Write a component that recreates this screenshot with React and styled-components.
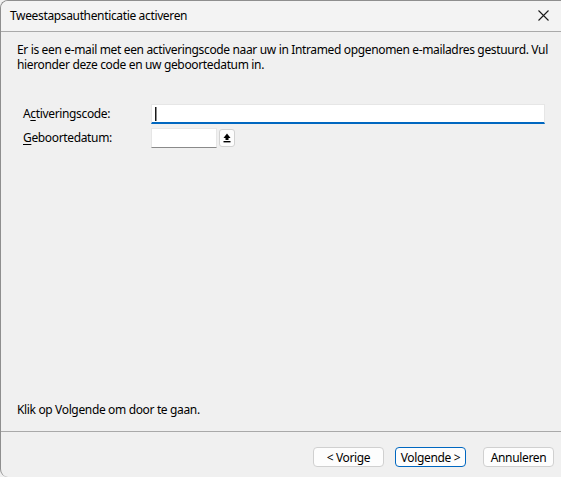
import React from "react";
import styled, { createGlobalStyle } from "styled-components";

const GlobalStyle = createGlobalStyle`
  html, body {
    margin: 0;
    padding: 0;
    background: #f0f0f0;
  }
  * { box-sizing: border-box; }
`;

const Window = styled.div`
  width: 561px;
  height: 477px;
  display: flex;
  flex-direction: column;
  background: #f0f0f0;
  border-top: 1px solid #8e8e8e;
  border-left: 1px solid #8e8e8e;
  border-radius: 8px 0 0 8px;
  overflow: hidden;
  font-family: "Noto Sans", "Liberation Sans", sans-serif;
  font-size: 12px;
  letter-spacing: -0.35px;
  color: #000;
`;

const TitleBar = styled.div`
  height: 31px;
  flex: none;
  display: flex;
  align-items: center;
  justify-content: space-between;
  padding: 0 8px 1px 9px;
  background: #f3f3f3;
  border-bottom: 1px solid #a9a9a9;
`;

const Title = styled.span`
  font-size: 12px;
`;

const CloseButton = styled.button`
  width: 20px;
  height: 20px;
  padding: 0;
  border: none;
  background: transparent;
  display: flex;
  align-items: center;
  justify-content: center;
  color: #1a1a1a;
`;

const Body = styled.div`
  flex: 1;
  display: flex;
  flex-direction: column;
  padding: 10px 6px 14px 16px;
`;

const Intro = styled.p`
  margin: 0;
  line-height: 15px;
`;

const Form = styled.div`
  margin: 32px 10px 0 0;
  padding-left: 6px;
  display: grid;
  grid-template-columns: 128px 1fr;
  row-gap: 4px;
  align-items: center;
`;

const Label = styled.label`
  line-height: 20px;
`;

const Key = styled.span`
  text-decoration: underline;
  text-underline-offset: 2px;
`;

const TextField = styled.div`
  height: 20px;
  background: #fff;
  border: 1px solid #e6e6e6;
  border-bottom: 2px solid #0067c0;
  display: flex;
  align-items: center;
  padding-left: 3px;
`;

const Caret = styled.span`
  width: 1px;
  height: 14px;
  background: #1a1a1a;
  box-shadow: 0.5px 0 0 #1a1a1a;
`;

const DateRow = styled.div`
  display: flex;
  align-items: center;
  gap: 2px;
`;

const DateField = styled.div`
  width: 66px;
  height: 20px;
  background: #fff;
  border: 1px solid #e6e6e6;
  border-bottom: 1px solid #8a8a8a;
`;

const SpinButton = styled.button`
  width: 16px;
  height: 18px;
  padding: 0;
  border: 1px solid #d2d2d2;
  border-radius: 3px;
  background: #fdfdfd;
  display: flex;
  align-items: center;
  justify-content: center;
`;

const Spacer = styled.div`
  flex: 1;
`;

const Hint = styled.p`
  margin: 0;
  line-height: 15px;
`;

const Footer = styled.div`
  flex: none;
  height: 46px;
  border-top: 1px solid #a9a9a9;
  display: flex;
  align-items: flex-start;
  justify-content: flex-end;
  padding: 15px 7px 0 0;
`;

const Button = styled.button`
  width: 71px;
  height: 20px;
  padding: 0;
  margin-left: ${(p) => p.$gap}px;
  background: #fdfdfd;
  border: 1px solid ${(p) => (p.$primary ? "#0067c0" : "#d0d0d0")};
  border-radius: 4px;
  font-family: inherit;
  font-size: 12px;
  letter-spacing: inherit;
  color: #000;
`;

const CloseIcon = () => (
  <svg width="11" height="11" viewBox="0 0 11 11">
    <path d="M0.5 0.5 L10.5 10.5 M10.5 0.5 L0.5 10.5" stroke="currentColor" strokeWidth="1.1" />
  </svg>
);

const UploadIcon = () => (
  <svg width="8" height="10" viewBox="0 0 8 10">
    <path d="M4 0.5 L7.5 5 L0.5 5 Z" fill="#000" />
    <rect x="2.5" y="4.5" width="3" height="2.5" fill="#000" />
    <rect x="0.5" y="8" width="7" height="1.4" fill="#000" />
  </svg>
);

export default function App() {
  return (
    <>
      <GlobalStyle />
      <Window>
        <TitleBar>
          <Title>Tweestapsauthenticatie activeren</Title>
          <CloseButton aria-label="Sluiten">
            <CloseIcon />
          </CloseButton>
        </TitleBar>
        <Body>
          <Intro>
            Er is een e-mail met een activeringscode naar uw in Intramed opgenomen e-mailadres gestuurd. Vul
            hieronder deze code en uw geboortedatum in.
          </Intro>
          <Form>
            <Label>
              A<Key>c</Key>tiveringscode:
            </Label>
            <TextField>
              <Caret />
            </TextField>
            <Label>
              <Key>G</Key>eboortedatum:
            </Label>
            <DateRow>
              <DateField />
              <SpinButton aria-label="Kiezen">
                <UploadIcon />
              </SpinButton>
            </DateRow>
          </Form>
          <Spacer />
          <Hint>Klik op Volgende om door te gaan.</Hint>
        </Body>
        <Footer>
          <Button $gap={0}>&lt; Vorige</Button>
          <Button $gap={11} $primary>
            Volgende &gt;
          </Button>
          <Button $gap={17}>Annuleren</Button>
        </Footer>
      </Window>
    </>
  );
}
